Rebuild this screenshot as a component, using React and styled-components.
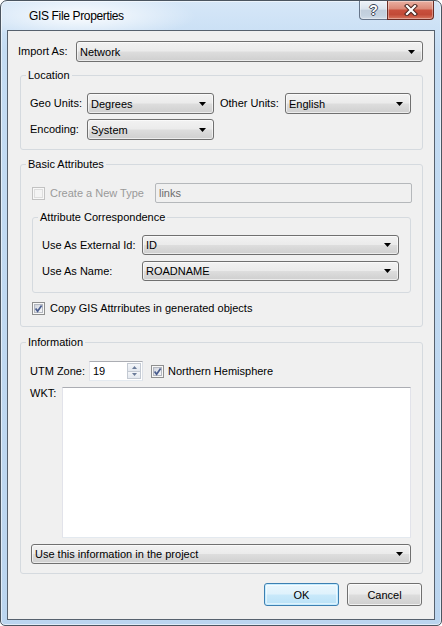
import React from "react";
import styled, { createGlobalStyle } from "styled-components";

const GlobalStyle = createGlobalStyle`
  html, body { margin: 0; padding: 0; background: #ffffff; }
  body {
    width: 442px;
    height: 626px;
    overflow: hidden;
    font-family: "Liberation Sans", Arial, sans-serif;
    font-size: 11px;
    color: #000;
  }
  *, *::before, *::after { box-sizing: border-box; }
`;

/* ---------- window chrome ---------- */

const Frame = styled.div`
  width: 442px;
  height: 626px;
  display: flex;
  flex-direction: column;
  padding: 0 6px 5px;
  border: 1px solid #4b5560;
  border-radius: 7px 7px 5px 5px;
  background:
    radial-gradient(ellipse 115px 24px at 80px 15px, rgba(255, 255, 255, 0.9), rgba(255, 255, 255, 0)),
    linear-gradient(180deg, #d6e7f8 0%, #c4dcf3 8%, #bbd5ef 100%);
  box-shadow: inset 0 0 0 1px rgba(255, 255, 255, 0.55);
`;

const TitleBar = styled.div`
  flex: 0 0 29px;
  display: flex;
  align-items: flex-start;
  justify-content: space-between;
`;

const Title = styled.span`
  margin: 7px 0 0 22px;
  font-size: 12px;
  line-height: 16px;
  letter-spacing: -0.35px;
  color: #000;
`;

const Controls = styled.div`
  display: flex;
  margin-right: 1px;
`;

const CaptionButton = styled.div`
  width: ${(p) => p.$w}px;
  height: 19px;
  display: flex;
  align-items: center;
  justify-content: center;
  border: 1px solid ${(p) => (p.$danger ? "#6b2d25" : "#66758a")};
  border-top: none;
  border-right: ${(p) => (p.$danger ? "1px solid #6b2d25" : "none")};
  border-radius: ${(p) => (p.$danger ? "0 0 4px 0" : "0 0 0 4px")};
  background: ${(p) =>
    p.$danger
      ? "linear-gradient(180deg, #eab0a2 0%, #dc8a78 42%, #c9503d 52%, #c24a37 75%, #d8765f 100%)"
      : "linear-gradient(180deg, #eef3f8 0%, #dae3ed 45%, #c1cedc 52%, #c4d2e0 80%, #d2dde9 100%)"};
  box-shadow: inset 0 0 0 1px rgba(255, 255, 255, 0.35);
`;

const HelpGlyph = styled.span`
  font-size: 14px;
  font-weight: bold;
  line-height: 14px;
  color: #ffffff;
  text-shadow: 1px 0 #3c4756, -1px 0 #3c4756, 0 1px #3c4756, 0 -1px #3c4756;
`;

const Client = styled.div`
  flex: 1;
  display: flex;
  flex-direction: column;
  border: 1px solid #56616e;
  background: #f0f0f0;
  padding: 10px 11px 13px 10px;
`;

/* ---------- form parts ---------- */

const Row = styled.div`
  display: flex;
  align-items: ${(p) => p.$align ?? "center"};
  margin-top: ${(p) => p.$mt ?? 0}px;
  margin-left: ${(p) => p.$ml ?? 0}px;
`;

const Label = styled.span`
  flex: 0 0 ${(p) => p.$w}px;
  line-height: 13px;
  white-space: nowrap;
  color: ${(p) => (p.$disabled ? "#9a9a9a" : "#000")};
`;

const Combo = styled.div`
  display: flex;
  align-items: center;
  flex: ${(p) => (p.$w ? `0 0 ${p.$w}px` : "1 1 auto")};
  height: ${(p) => p.$h ?? 20}px;
  padding: 0 7px 0 3px;
  border: 1px solid #707070;
  border-radius: 3px;
  background: linear-gradient(180deg, #f2f2f2 0%, #ebebeb 48%, #dddddd 52%, #cfcfcf 100%);
  box-shadow: inset 0 0 0 1px rgba(255, 255, 255, 0.6);
`;

const ComboValue = styled.span`
  flex: 1;
  white-space: nowrap;
`;

const Arrow = () => (
  <svg width="7" height="4" viewBox="0 0 7 4">
    <path d="M0 0H7L3.5 4Z" fill="#000" />
  </svg>
);

const Select = ({ value, w, h }) => (
  <Combo $w={w} $h={h}>
    <ComboValue>{value}</ComboValue>
    <Arrow />
  </Combo>
);

const Group = styled.fieldset`
  margin: ${(p) => p.$mt}px 0 0 ${(p) => p.$ml ?? 2}px;
  padding: 0;
  min-width: 0;
  border: 1px solid #d5dadf;
  border-radius: 3px;
`;

const Legend = styled.legend`
  margin-left: 5px;
  padding: 0 2px;
  line-height: 14px;
`;

const GroupBody = styled.div`
  display: flex;
  flex-direction: column;
  padding: ${(p) => p.$pad};
`;

const Box = styled.span`
  flex: 0 0 13px;
  width: 13px;
  height: 13px;
  padding: 1px;
  border: 1px solid ${(p) => (p.$disabled ? "#c2c2c2" : "#8e8f8f")};
  background: #f8f8f8;
`;

const BoxInner = styled.span`
  display: flex;
  align-items: center;
  justify-content: center;
  width: 9px;
  height: 9px;
  border: 1px solid ${(p) => (p.$disabled ? "#dedede" : "#b4b8c0")};
  background: ${(p) =>
    p.$disabled ? "#f4f4f4" : "linear-gradient(135deg, #cfd3dc 0%, #e9ebf0 60%, #f7f7f9 100%)"};
`;

const CheckBox = ({ checked, disabled }) => (
  <Box $disabled={disabled}>
    <BoxInner $disabled={disabled}>
      {checked && (
        <svg width="9" height="9" viewBox="0 0 9 9" style={{ margin: -1 }}>
          <path d="M1.6 4.4L3.6 7.2L7.6 1.4" fill="none" stroke="#4a5d8e" strokeWidth="1.7" />
        </svg>
      )}
    </BoxInner>
  </Box>
);

const CheckText = styled.span`
  margin-left: ${(p) => p.$gap ?? 5}px;
  line-height: 13px;
  white-space: nowrap;
  color: ${(p) => (p.$disabled ? "#9a9a9a" : "#000")};
`;

const TextInput = styled.div`
  flex: 0 0 ${(p) => p.$w}px;
  height: 20px;
  display: flex;
  align-items: center;
  padding-left: 3px;
  margin-left: ${(p) => p.$ml ?? 0}px;
  border: 1px solid #b5b8bb;
  border-radius: 2px;
  background: #f0f0f0;
  color: #6d6d6d;
`;

const Spin = styled.div`
  flex: 0 0 54px;
  height: 20px;
  display: flex;
  border: 1px solid;
  border-color: #abadb3 #dbdfe6 #e3e9ef #e2e3ea;
  background: #ffffff;
`;

const SpinValue = styled.span`
  flex: 1;
  display: flex;
  align-items: center;
  padding-left: 3px;
`;

const SpinButtons = styled.div`
  flex: 0 0 15px;
  display: flex;
  flex-direction: column;
  padding: 1px 1px 1px 0;
`;

const SpinButton = styled.span`
  flex: 1;
  display: flex;
  align-items: center;
  justify-content: center;
  border: 1px solid #c3c9d2;
  border-top-width: ${(p) => (p.$down ? 0 : 1)}px;
  background: linear-gradient(180deg, #f4f6f9 0%, #e3e8ef 100%);
`;

const SpinArrow = ({ down }) => (
  <svg width="5" height="3" viewBox="0 0 5 3">
    <path d={down ? "M0 0H5L2.5 3Z" : "M0 3H5L2.5 0Z"} fill="#6a7b99" />
  </svg>
);

const TextArea = styled.div`
  flex: 1;
  height: 151px;
  border: 1px solid;
  border-color: #abadb3 #e2e3ea #e3e9ef #e2e3ea;
  background: #ffffff;
`;

const ButtonRow = styled.div`
  display: flex;
  justify-content: flex-end;
  gap: 8px;
  margin: 9px 1px 0 0;
`;

const Button = styled.button`
  width: 75px;
  height: 23px;
  padding: 0;
  font: inherit;
  color: #000;
  border: 1px solid ${(p) => (p.$default ? "#3c7fb1" : "#707070")};
  border-radius: 3px;
  background: ${(p) =>
    p.$default
      ? "linear-gradient(180deg, #eaf6fd 0%, #dff2fc 48%, #c9e9fa 52%, #b9e1f7 100%)"
      : "linear-gradient(180deg, #f2f2f2 0%, #ebebeb 48%, #dddddd 52%, #cfcfcf 100%)"};
  box-shadow: ${(p) =>
    p.$default
      ? "inset 0 0 0 1px #c5ecff, inset 0 0 0 2px rgba(255,255,255,0.5)"
      : "inset 0 0 0 1px rgba(255,255,255,0.7)"};
`;

export default function App() {
  return (
    <>
      <GlobalStyle />
      <Frame>
        <TitleBar>
          <Title>GIS File Properties</Title>
          <Controls>
            <CaptionButton $w={28}>
              <HelpGlyph>?</HelpGlyph>
            </CaptionButton>
            <CaptionButton $w={47} $danger>
              <svg width="14" height="12" viewBox="0 0 14 12">
                <path d="M3 2L11 10M11 2L3 10" stroke="#4b2620" strokeWidth="4.2" strokeLinecap="square" />
                <path d="M3 2L11 10M11 2L3 10" stroke="#ffffff" strokeWidth="2.2" strokeLinecap="square" />
              </svg>
            </CaptionButton>
          </Controls>
        </TitleBar>

        <Client>
          <Row>
            <Label $w={58}>Import As:</Label>
            <Select value="Network" h={21} />
          </Row>

          <Group $mt={6}>
            <Legend>Location</Legend>
            <GroupBody $pad="11px 11px 9px 9px">
              <Row>
                <Label $w={57}>Geo Units:</Label>
                <Select value="Degrees" w={127} h={21} />
                <Label $w={65} style={{ marginLeft: 6 }}>Other Units:</Label>
                <Select value="English" w={126} h={21} />
              </Row>
              <Row $mt={5}>
                <Label $w={57}>Encoding:</Label>
                <Select value="System" w={127} h={21} />
              </Row>
            </GroupBody>
          </Group>

          <Group $mt={7}>
            <Legend>Basic Attributes</Legend>
            <GroupBody $pad="12px 11px 11px 11px">
              <Row>
                <CheckBox disabled />
                <CheckText $disabled>Create a New Type</CheckText>
                <TextInput $w={257} $ml={11}>links</TextInput>
              </Row>

              <Group $mt={7} $ml={0}>
                <Legend>Attribute Correspondence</Legend>
                <GroupBody $pad="11px 10px 11px 9px">
                  <Row>
                    <Label $w={100}>Use As External Id:</Label>
                    <Select value="ID" w={257} />
                  </Row>
                  <Row $mt={6}>
                    <Label $w={100}>Use As Name:</Label>
                    <Select value="ROADNAME" w={257} />
                  </Row>
                </GroupBody>
              </Group>

              <Row $mt={9}>
                <CheckBox checked />
                <CheckText>Copy GIS Attrributes in generated objects</CheckText>
              </Row>
            </GroupBody>
          </Group>

          <Group $mt={8}>
            <Legend>Information</Legend>
            <GroupBody $pad="12px 11px 9px 9px">
              <Row>
                <Label $w={59}>UTM Zone:</Label>
                <Spin>
                  <SpinValue>19</SpinValue>
                  <SpinButtons>
                    <SpinButton>
                      <SpinArrow />
                    </SpinButton>
                    <SpinButton $down>
                      <SpinArrow down />
                    </SpinButton>
                  </SpinButtons>
                </Spin>
                <Row $ml={8}>
                  <CheckBox checked />
                  <CheckText $gap={4}>Northern Hemisphere</CheckText>
                </Row>
              </Row>
              <Row $mt={6} $align="flex-start">
                <Label $w={32}>WKT:</Label>
                <TextArea />
              </Row>
              <Row $mt={6} $ml={1}>
                <Select value="Use this information in the project" />
              </Row>
            </GroupBody>
          </Group>

          <ButtonRow>
            <Button $default>OK</Button>
            <Button>Cancel</Button>
          </ButtonRow>
        </Client>
      </Frame>
    </>
  );
}
